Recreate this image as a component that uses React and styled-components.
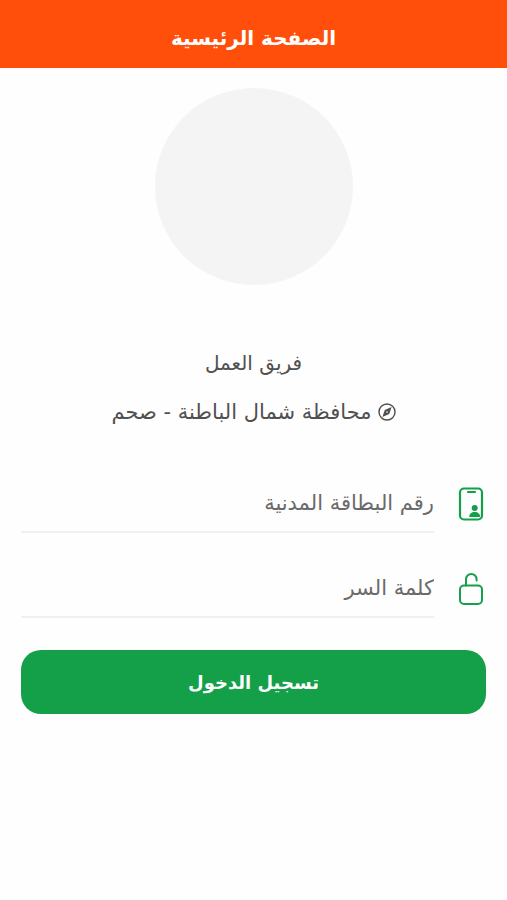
import React, { useState } from 'react';
import styled, { createGlobalStyle } from 'styled-components';

const GlobalStyle = createGlobalStyle`
  * {
    box-sizing: border-box;
  }

  body {
    margin: 0;
    background-color: #fefefe;
    font-family: "DejaVu Sans", "Noto Sans", sans-serif;
  }
`;

const Page = styled.div`
  min-height: 100vh;
`;

const Header = styled.header`
  display: flex;
  align-items: center;
  justify-content: center;
  height: 68px;
  padding-top: 8px;
  background-color: #ff4f0a;
`;

const Title = styled.h1`
  margin: 0;
  color: white;
  font-size: 20px;
  line-height: 32px;
  font-weight: bold;
`;

const Content = styled.main`
  display: flex;
  flex-direction: column;
  padding: 20px 21px;
`;

const Avatar = styled.div`
  align-self: center;
  width: 198px;
  height: 197px;
  border-radius: 50%;
  background-color: #f4f4f4;
`;

const TeamInfo = styled.section`
  display: flex;
  flex-direction: column;
  align-items: center;
  gap: 17px;
  margin-top: 62px;
`;

const TeamName = styled.p`
  margin: 0;
  color: #505050;
  font-size: 20px;
  line-height: 32px;
`;

const TeamLocation = styled(TeamName)`
  display: flex;
  align-items: center;
  gap: 6px;
  font-size: 21px;
`;

const Form = styled.form`
  display: flex;
  flex-direction: column;
  gap: 27px;
  margin-top: 47px;
`;

const Field = styled.label`
  display: flex;
  align-items: center;
  gap: 22px;
`;

const FieldIcon = styled.span`
  display: flex;
  justify-content: center;
  width: 30px;
`;

const FieldInput = styled.input`
  flex: 1;
  min-width: 0;
  height: 58px;
  padding: 0;
  border: none;
  border-bottom: 2px solid #f0f0f0;
  background: transparent;
  color: #505050;
  font-family: inherit;
  font-size: 21px;
  line-height: 36px;
  outline: none;

  &::placeholder {
    color: #6a6a6a;
    line-height: 36px;
    opacity: 1;
  }
`;

const SubmitButton = styled.button`
  height: 64px;
  margin-top: 5px;
  border: none;
  border-radius: 20px;
  background-color: #14a048;
  color: white;
  font-family: inherit;
  font-size: 18px;
  font-weight: bold;
  cursor: pointer;
`;

const CompassIcon = () => (
    <svg width="18" height="18" viewBox="0 0 18 18" fill="none" aria-hidden="true">
        <circle cx="9" cy="9" r="8" stroke="#505050" strokeWidth="1.4" />
        <path d="M13.6 4 11.2 10.9 4.4 14 6.8 7.1Z" fill="#505050" />
        <circle cx="9" cy="9" r="0.8" fill="#fefefe" />
    </svg>
);

const CardIcon = () => (
    <svg width="26" height="34" viewBox="0 0 26 34" fill="none" aria-hidden="true">
        <rect x="2" y="1.5" width="22" height="31" rx="4" stroke="#14a048" strokeWidth="2.2" />
        <path d="M10 5h7" stroke="#14a048" strokeWidth="2.2" strokeLinecap="round" />
        <circle cx="16.7" cy="21" r="3" fill="#14a048" />
        <path d="M11.2 30c0-3 2.2-5 5.5-5s5.5 2 5.5 5Z" fill="#14a048" />
    </svg>
);

const LockIcon = () => (
    <svg width="26" height="34" viewBox="0 0 26 34" fill="none" aria-hidden="true">
        <rect x="2" y="13.5" width="22" height="18.5" rx="4" stroke="#14a048" strokeWidth="2" />
        <path d="M8 13.5V7.2a5.3 5.3 0 0 1 10.6 0V8.5" stroke="#14a048" strokeWidth="2" strokeLinecap="round" />
    </svg>
);

const App = () => {
    const [civilId, setCivilId] = useState('');
    const [password, setPassword] = useState('');

    const handleSubmit = (e) => {
        e.preventDefault();
    };

    return (
        <Page dir="rtl" lang="ar">
            <GlobalStyle />
            <Header>
                <Title>الصفحة الرئيسية</Title>
            </Header>
            <Content>
                <Avatar />
                <TeamInfo>
                    <TeamName>فريق العمل</TeamName>
                    <TeamLocation>
                        <CompassIcon />
                        محافظة شمال الباطنة - صحم
                    </TeamLocation>
                </TeamInfo>
                <Form onSubmit={handleSubmit}>
                    <Field>
                        <FieldIcon><CardIcon /></FieldIcon>
                        <FieldInput
                            type="text"
                            value={civilId}
                            onChange={(e) => setCivilId(e.target.value)}
                            placeholder="رقم البطاقة المدنية"
                            aria-label="رقم البطاقة المدنية"
                        />
                    </Field>
                    <Field>
                        <FieldIcon><LockIcon /></FieldIcon>
                        <FieldInput
                            type="password"
                            value={password}
                            onChange={(e) => setPassword(e.target.value)}
                            placeholder="كلمة السر"
                            aria-label="كلمة السر"
                        />
                    </Field>
                    <SubmitButton type="submit">تسجيل الدخول</SubmitButton>
                </Form>
            </Content>
        </Page>
    );
};

export default App;
